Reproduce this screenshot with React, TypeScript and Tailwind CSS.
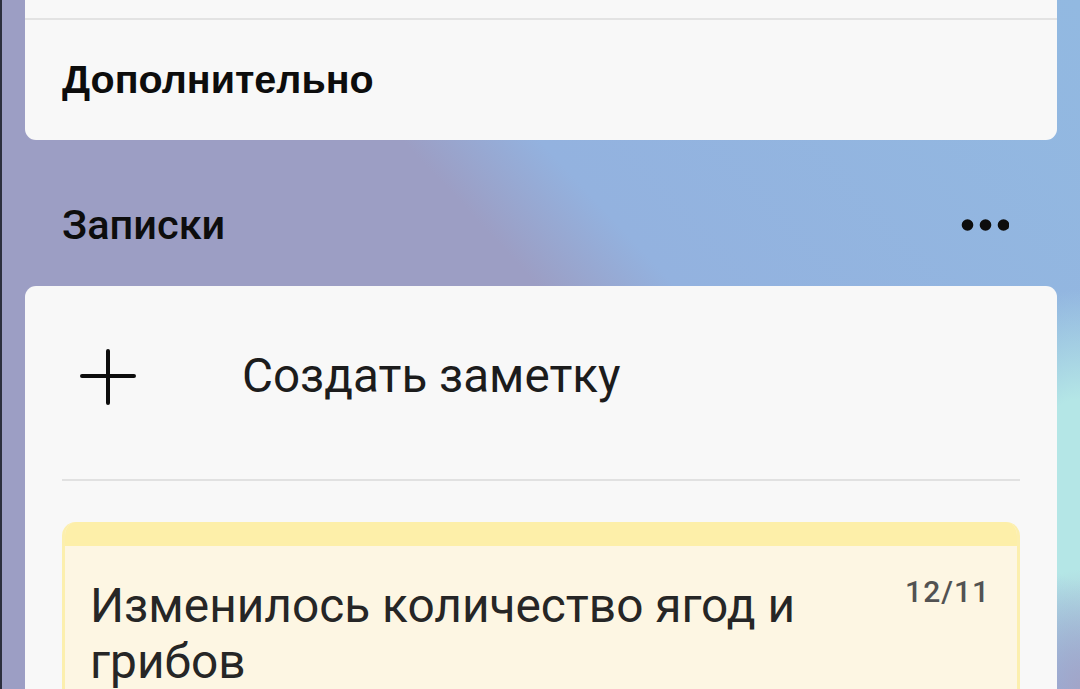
// Notes panel from a phone settings-like screen
function DotsIcon() {
  return (
    <svg width="48" height="14" viewBox="0 0 48 14" aria-hidden>
      <circle cx="6.5" cy="7" r="5.8" fill="#0d0d0d" />
      <circle cx="24.5" cy="7" r="5.8" fill="#0d0d0d" />
      <circle cx="42.5" cy="7" r="5.8" fill="#0d0d0d" />
    </svg>
  )
}

function PlusIcon() {
  return (
    <svg width="56" height="56" viewBox="0 0 56 56" aria-hidden>
      <path d="M28 2v52M2 27h52" stroke="#0d0d0d" strokeWidth="4" strokeLinecap="round" fill="none" />
    </svg>
  )
}

export default function App() {
  return (
    <div className="relative h-[689px] w-[1080px] overflow-hidden border-l-2 border-[#2c2f3d] bg-[image:radial-gradient(ellipse_70px_120px_at_100%_100%,#a2a5c8_0%,transparent_100%),radial-gradient(ellipse_120px_200px_at_100%_71%,#b4e6e6_0%,#b4e6e6_45%,transparent_100%),linear-gradient(47deg,#9c9ec4_0%,#9c9ec4_53%,#93b2df_61%,#92b9e1_100%)] px-[23px] font-['Roboto',sans-serif]">
      <div className="rounded-b-[11px] bg-[#f8f8f8]">
        <div className="h-[18px]" />
        <div className="h-[2px] bg-[#e3e3e3]" />
        <div className="flex h-[120px] items-center px-[37px]">
          <span className="font-['Liberation_Sans',sans-serif] text-[39.5px] font-bold text-[#0d0d0d]">Дополнительно</span>
        </div>
      </div>

      <div className="flex h-[146px] items-center justify-between pl-[37px] pr-[48px] pt-[24px]">
        <span className="text-[41.5px] font-medium text-[#0d0d0d]">Записки</span>
        <DotsIcon />
      </div>

      <div className="rounded-t-[11px] bg-[#f8f8f8] pb-10">
        <div className="flex h-[181px] items-center pl-[55px]">
          <PlusIcon />
          <span className="ml-[106px] text-[47.6px] text-[#1c1c1c]">Создать заметку</span>
        </div>
        <div className="mx-[37px] mt-[12px] h-[2px] bg-[#e1e1e1]" />

        <div className="mx-[37px] mt-[41px] overflow-hidden rounded-t-[14px] border-x-[3px] border-[#fcefae] bg-[#fdf6e3]">
          <div className="h-[24px] bg-[#fdefa9]" />
          <div className="flex items-start justify-between pl-[25px] pr-[27px] pt-[32px]">
            <div className="max-w-[760px] text-[47.8px] leading-[56px] text-[#262626]">
              Изменилось количество ягод и грибов
            </div>
            <div className="-mt-[3px] text-[30px] font-medium leading-[34px] tracking-[1px] text-[#525252]">12/11</div>
          </div>
        </div>
      </div>
    </div>
  )
}
